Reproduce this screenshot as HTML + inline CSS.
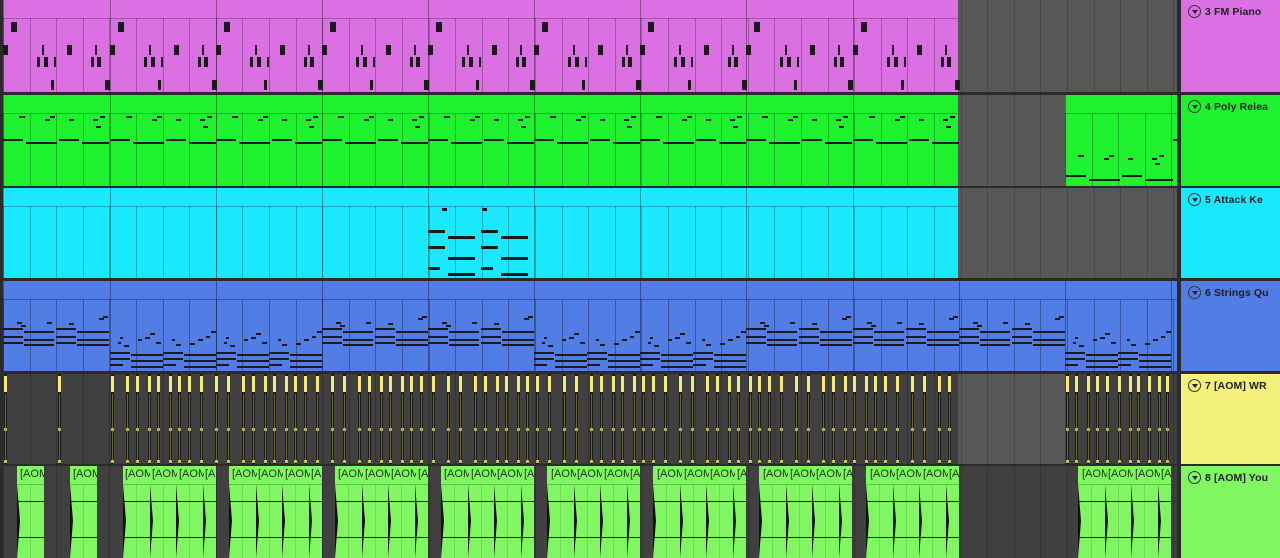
<!DOCTYPE html>
<html><head><meta charset="utf-8"><style>
*{margin:0;padding:0;box-sizing:border-box}
body{width:1280px;height:558px;overflow:hidden;background:#2b2b2b;position:relative;font-family:"Liberation Sans",sans-serif}
div{position:absolute}
.h{left:1181px;width:99px;}
.h .t{left:24px;top:6px;font-size:10.5px;font-weight:bold;color:#1f1f1f;white-space:nowrap;letter-spacing:.1px}
.h .c{left:7px;top:5px;width:13px;height:13px;border:1.3px solid #333;border-radius:50%}
.h .c:after{content:"";position:absolute;left:2.5px;top:3.5px;border-left:3.5px solid transparent;border-right:3.5px solid transparent;border-top:4px solid #222}
.lb{font-size:11px;color:#1a3510;top:468px;white-space:nowrap;overflow:hidden}
</style></head><body>
<div id="g" style="left:0;top:0;width:1280px;height:558px"></div>
<div class="h" style="top:0;height:92px;background:#da70e2"><div class="c"></div><div class="t">3 FM Piano</div></div>
<div class="h" style="top:95px;height:91px;background:#1ef22e"><div class="c"></div><div class="t">4 Poly Relea</div></div>
<div class="h" style="top:188px;height:90px;background:#19e8fd"><div class="c"></div><div class="t">5 Attack Ke</div></div>
<div class="h" style="top:281px;height:90px;background:#517de4"><div class="c"></div><div class="t">6 Strings Qu</div></div>
<div class="h" style="top:374px;height:90px;background:#f4f07c"><div class="c"></div><div class="t">7 [AOM] WR</div></div>
<div class="h" style="top:466px;height:92px;background:#80f662"><div class="c"></div><div class="t">8 [AOM] You</div></div>
<div class="lb" style="left:20px;width:25px">[AOM</div>
<div class="lb" style="left:73px;width:25px">[AOM</div>
<div class="lb" style="left:125px;width:25px">[AOM</div><div class="lb" style="left:152px;width:25px">[AOM</div><div class="lb" style="left:179px;width:25px">[AOM</div><div class="lb" style="left:205px;width:10px">[A</div>
<div class="lb" style="left:232px;width:25px">[AOM</div><div class="lb" style="left:258px;width:25px">[AOM</div><div class="lb" style="left:285px;width:25px">[AOM</div><div class="lb" style="left:311px;width:10px">[A</div>
<div class="lb" style="left:338px;width:25px">[AOM</div><div class="lb" style="left:365px;width:25px">[AOM</div><div class="lb" style="left:391px;width:25px">[AOM</div><div class="lb" style="left:418px;width:10px">[A</div>
<div class="lb" style="left:444px;width:25px">[AOM</div><div class="lb" style="left:471px;width:25px">[AOM</div><div class="lb" style="left:497px;width:25px">[AOM</div><div class="lb" style="left:524px;width:10px">[A</div>
<div class="lb" style="left:551px;width:25px">[AOM</div><div class="lb" style="left:577px;width:25px">[AOM</div><div class="lb" style="left:604px;width:25px">[AOM</div><div class="lb" style="left:630px;width:10px">[A</div>
<div class="lb" style="left:657px;width:25px">[AOM</div><div class="lb" style="left:684px;width:25px">[AOM</div><div class="lb" style="left:710px;width:25px">[AOM</div><div class="lb" style="left:737px;width:10px">[A</div>
<div class="lb" style="left:763px;width:25px">[AOM</div><div class="lb" style="left:790px;width:25px">[AOM</div><div class="lb" style="left:816px;width:25px">[AOM</div><div class="lb" style="left:843px;width:10px">[A</div>
<div class="lb" style="left:870px;width:25px">[AOM</div><div class="lb" style="left:896px;width:25px">[AOM</div><div class="lb" style="left:923px;width:25px">[AOM</div><div class="lb" style="left:949px;width:10px">[A</div>
<div class="lb" style="left:1082px;width:25px">[AOM</div><div class="lb" style="left:1108px;width:25px">[AOM</div><div class="lb" style="left:1135px;width:25px">[AOM</div><div class="lb" style="left:1161px;width:10px">[A</div>
<script>
var g=document.getElementById('g'),h='';
function r(x,y,w,hh,c,extra){h+='<div style="left:'+x+'px;top:'+y+'px;width:'+w+'px;height:'+hh+'px;background:'+c+';'+(extra||'')+'"></div>';}
var B=[3,110,216,322,428,534,640,746,853,959,1065,1171];
var rows=[[0,92],[95,91],[188,90],[281,90],[374,90],[466,92]];
rows.forEach(function(rw){r(3,rw[0],1174,rw[1],'#575757');
 for(var x=3;x<1177;x+=26.6)r(Math.round(x),rw[0],1,rw[1],'#464646');});
function clip(ri,x1,x2,col,lc){var y=rows[ri][0],hh=rows[ri][1];
 r(x1,y,x2-x1,hh,col);r(x1,y+18,x2-x1,1,lc);
 for(var x=x1;x<x2;x+=26.6)r(Math.round(x),y+18,1,hh-18,lc);
 for(var i=0;i<B.length;i++)if(B[i]>=x1&&B[i]<x2)r(B[i],y,1,hh,'rgba(0,0,0,.35)');}
clip(0,3,958,'#da70e2','rgba(0,0,0,.25)');
clip(1,3,958,'#1ef22e','rgba(0,0,0,.25)');clip(1,1065,1177,'#1ef22e','rgba(0,0,0,.25)');
clip(2,3,958,'#19e8fd','rgba(0,0,0,.25)');
clip(3,3,1177,'#517de4','rgba(0,0,0,.3)');
var N='#1a1a1a';
for(var b=0;b<9;b++){var x=B[b];
 [[8,22,6,10],[0,45,5,10],[39,45,2,10],[34,57,3,10],[41,57,4,10],[51,57,2,10],[48,80,3,10],[64,45,5,10],[92,45,2,10],[88,57,3,10],[94,57,4,10],[102,80,5,10]].forEach(function(n){r(x+n[0],n[1],n[2],n[3],N);});}
for(var b=0;b<9;b++){var x=B[b],y=95;
 [[0,44,20],[23,47,31],[56,44,20],[79,47,27]].forEach(function(n){r(x+n[0],y+n[1],n[2],2,N);});
 [[16,21,6],[42,24,5],[47,21,5],[66,24,5],[90,24,5],[97,21,5],[93,31,5]].forEach(function(n){r(x+n[0],y+n[1],n[2],2,N);});}
(function(){var x=1066,y=95;[[0,80,20],[23,84,31],[56,80,20],[79,84,28]].forEach(function(n){r(x+n[0],y+n[1],n[2],2,N);});
[[12,60,6],[38,63,5],[43,60,5],[62,63,5],[86,63,5],[93,60,5],[89,68,5]].forEach(function(n){r(x+n[0],y+n[1],n[2],2,N);});r(1173,139,4,2,N);})();
(function(){var x=428,y=188;[[14,20,5],[0,42,17],[0,58,17],[0,79,12],[20,48,27],[20,69,27],[20,85,27],[54,20,5],[53,42,17],[53,58,17],[53,79,12],[73,48,27],[73,69,27],[73,85,27]].forEach(function(n){r(x+n[0],y+n[1],n[2],3,N);});})();
var hi=[0,3,4,7,8,9],y6=281;
for(var b=0;b<11;b++){var x=B[b];var end=Math.min(B[b]+106,1177);
 if(hi.indexOf(b)>=0){[[0,47,20],[0,55,20],[0,61,20],[21,50,30],[21,58,30],[21,63,30],[53,47,20],[53,55,20],[53,61,20],[74,50,32],[74,58,32],[74,63,32]].forEach(function(n){r(x+n[0],y6+n[1],Math.min(n[2],end-x-n[0]),2,N);});
  [[14,41,5],[18,44,5],[44,41,5],[66,42,5],[96,37,5],[100,35,5]].forEach(function(n){r(x+n[0],y6+n[1],n[2],2,N);});}
 else{[[0,71,20],[0,77,20],[0,83,13],[21,73,32],[21,79,32],[21,85,32],[53,71,20],[53,77,20],[53,83,13],[74,73,32],[74,79,32],[74,85,32]].forEach(function(n){r(x+n[0],y6+n[1],Math.min(n[2],end-x-n[0]),2,N);});
  [[10,56,3],[8,61,3],[14,64,5],[28,58,4],[35,56,5],[40,52,5],[46,61,5],[62,58,3],[66,63,5],[80,62,5],[88,58,5],[96,55,4],[101,50,5]].forEach(function(n){r(x+n[0],y6+n[1],n[2],2,N);});}}
var y7=374;r(3,y7,955,90,'#404040');r(1065,y7,112,90,'#404040');
for(var x=3;x<1177;x+=26.6){if(x>958&&x<1065)continue;r(Math.round(x),y7,1,90,'#333');}
function yl(x){r(x,y7,3,90,'#1c1c12');r(x,y7+2,3,16,'#f3ea7a');r(x+1,y7+20,1,68,'#6b6530');r(x,y7+54,3,3,'#b8b058');r(x,y7+86,3,3,'#c8c060');}
yl(4);yl(58);
var s=0;for(var x=111;x<952;){yl(Math.round(x));s=(s*7+3)%11;x+=8+s%6+(s%3==0?4:0);}
for(var x=1066;x<1175;){yl(Math.round(x));s=(s*7+3)%11;x+=8+s%6;}
var y8=466;r(3,y8,1174,92,'#404040');
for(var x=3;x<1177;x+=26.6){r(Math.round(x),y8,1,92,'#333');}
function ac(x,w){r(x,y8,w,92,'#80f662');r(x,y8+18,w,1,'#5fc548');
 r(x+13,y8+18,1,74,'rgba(0,0,0,.12)');r(x,y8+35,w,1,'#1c2a10');r(x,y8+71,w,1,'#1c2a10');
 h+='<div style="left:'+(x)+'px;top:'+(y8+18)+'px;width:0;height:0;border-top:37px solid transparent;border-bottom:37px solid transparent;border-left:3px solid #111"></div>';}
ac(17,27);ac(70,27);
for(var b=1;b<9;b++){var x=B[b]+13;ac(x,27);ac(x+27,26);ac(x+53,27);ac(x+80,Math.min(13,B[b+1]-x-80));}
ac(1078,27);ac(1105,26);ac(1131,27);ac(1158,13);
r(1177,0,4,558,'#2b2b2b');
rows.forEach(function(rw,i){if(i)r(0,rw[0]-2,1181,2,'#2b2b2b');});
r(0,0,3,558,'#2b2b2b');
g.innerHTML=h;
</script>
</body></html>
